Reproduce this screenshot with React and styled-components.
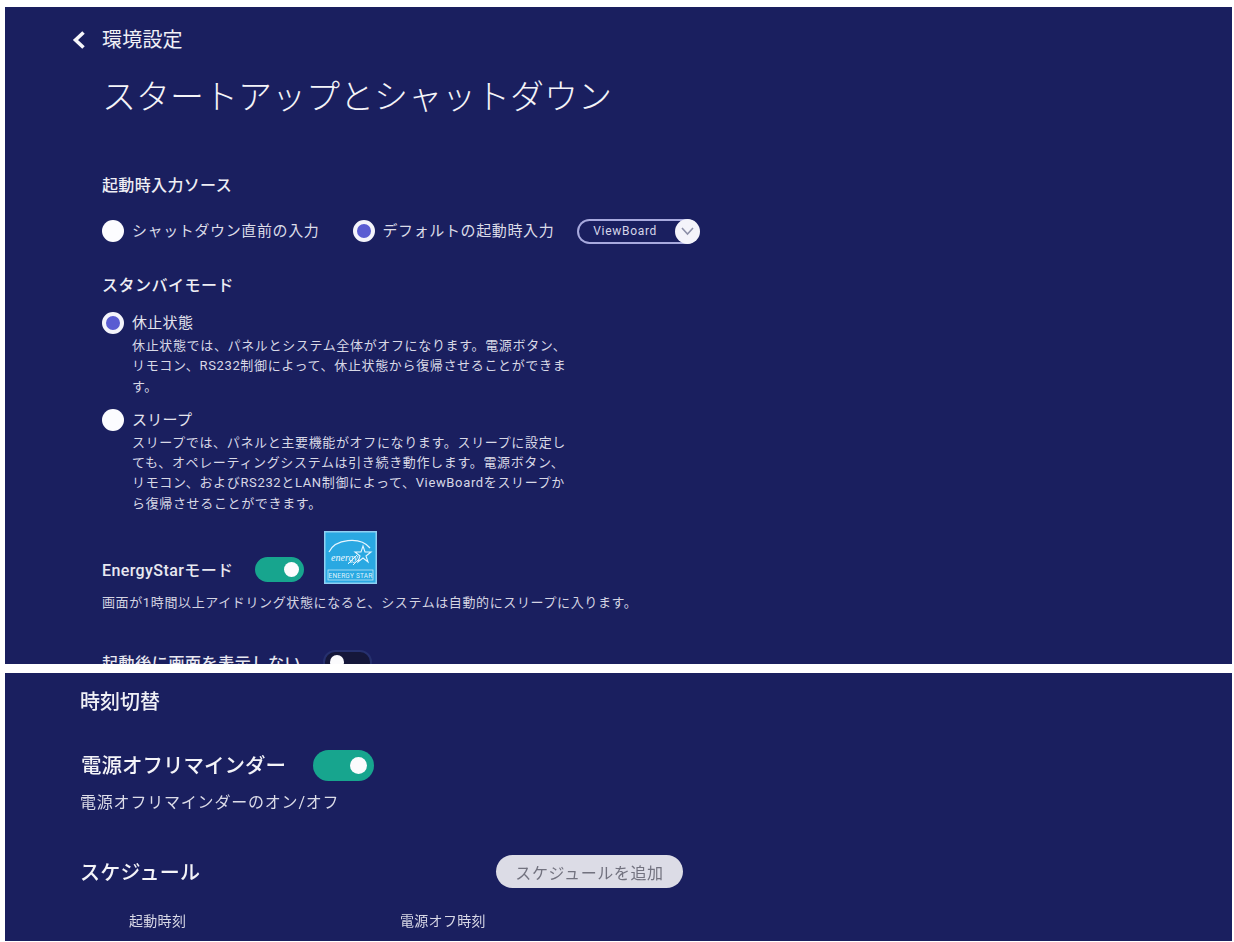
import React from 'react'
import styled, { createGlobalStyle } from 'styled-components'

const Global = createGlobalStyle`
  html, body { margin: 0; padding: 0; background: #fff; }
  body { font-family: Roboto, "Noto Sans CJK JP", sans-serif; color: #f0f0f6; }
`

const Page = styled.div`
  width: 1234px;
  height: 942px;
  box-sizing: border-box;
  padding: 7px 2px 0 5px;
  display: flex;
  flex-direction: column;
  gap: 9px;
  overflow: hidden;
  filter: blur(0.45px);
`

const Panel = styled.section`
  background: #1a1f5f;
  height: ${p => p.$height}px;
  box-sizing: border-box;
  padding: ${p => p.$padding};
  overflow: hidden;
  flex: none;
`

const BackRow = styled.div`
  display: flex;
  align-items: center;
  height: 26px;
  margin-left: -31px;
  gap: 15px;
`

const BackLabel = styled.span`
  font-size: 20px;
  line-height: 26px;
  letter-spacing: 0.2px;
`

const Title = styled.h1`
  font-size: 34px;
  font-weight: 300;
  line-height: 48px;
  height: 48px;
  margin: 20px 0 0;
  color: #f4f4f8;
`

const Heading = styled.h2`
  font-size: 16px;
  font-weight: 500;
  line-height: 22px;
  letter-spacing: ${p => p.$spacing}px;
  margin: ${p => p.$top}px 0 0;
  color: #eeeef4;
`

const InlineRow = styled.div`
  display: flex;
  align-items: center;
  height: 26px;
  margin-top: 21px;
`

const Dot = styled.span`
  flex: none;
  width: 22px;
  height: 22px;
  box-sizing: border-box;
  border-radius: 50%;
  background: ${p => (p.$on ? '#5a5cd2' : '#fcfcff')};
  border: ${p => (p.$on ? '4px solid #f4f4fb' : 'none')};
`

const RadioText = styled.span`
  font-size: 15px;
  line-height: 22px;
  letter-spacing: 0.62px;
  margin-left: ${p => p.$left}px;
  margin-right: ${p => p.$right || 0}px;
  color: #dcdce8;
`

const Select = styled.div`
  width: 122px;
  height: 25px;
  box-sizing: border-box;
  border: 2px solid #a8aade;
  border-right: none;
  border-radius: 13px;
  display: flex;
  align-items: center;
  justify-content: space-between;
  padding-left: 14px;
  font-size: 12px;
  font-weight: 400;
  letter-spacing: 0.7px;
  color: #d6d6ea;
`

const SelectKnob = styled.span`
  width: 25px;
  height: 25px;
  margin-right: -1px;
  border-radius: 50%;
  background: #f4f4fa;
  color: #8d90a8;
  display: flex;
  align-items: center;
  justify-content: center;
`

const Option = styled.div`
  display: grid;
  grid-template-columns: 22px 1fr;
  column-gap: 8px;
  margin-top: ${p => p.$top}px;
`

const OptionLabel = styled.div`
  font-size: 15px;
  line-height: 22px;
  letter-spacing: 0.3px;
  color: #e4e4ee;
`

const OptionText = styled.p`
  grid-column: 2;
  margin: 2px 0 0;
  font-size: 13px;
  line-height: 20.3px;
  letter-spacing: 0.65px;
  color: #d8d8e6;
  white-space: nowrap;
`

const StarRow = styled.div`
  display: flex;
  align-items: flex-end;
  margin-top: 17px;
  height: 53px;
`

const StarLabel = styled.span`
  font-size: 16px;
  font-weight: 500;
  line-height: 24px;
  letter-spacing: 0.4px;
  width: 153px;
  color: #e8e8f0;
  padding-bottom: 1px;
`

const Switch = styled.span`
  display: flex;
  align-items: center;
  flex: none;
  width: ${p => p.$w}px;
  height: ${p => p.$h}px;
  box-sizing: border-box;
  padding: 0 ${p => p.$pad}px;
  border-radius: ${p => p.$h / 2}px;
  background: ${p => (p.$on ? '#17a58e' : '#15173a')};
  justify-content: ${p => (p.$on ? 'flex-end' : 'flex-start')};
  border: ${p => (p.$on ? 'none' : '2px solid #26306e')};
  margin-bottom: ${p => p.$bottom || 0}px;
`

const Thumb = styled.span`
  width: ${p => p.$size}px;
  height: ${p => p.$size}px;
  border-radius: 50%;
  background: #fbfbfd;
`

const LogoWrap = styled.span`
  display: block;
  flex: none;
  width: 53px;
  height: 53px;
  margin-left: 20px;
`

const Note = styled.p`
  margin: 9px 0 0;
  font-size: 13px;
  line-height: 20px;
  letter-spacing: 0.62px;
  color: #d4d4e2;
  white-space: nowrap;
`

const ClippedRow = styled.div`
  display: flex;
  align-items: center;
  margin-top: 37px;
  height: 24px;
`

const ClippedLabel = styled.span`
  font-size: 16px;
  font-weight: 500;
  width: 221px;
  letter-spacing: 0.6px;
  color: #e8e8f0;
`

const SectionTitle = styled.h2`
  font-size: 20px;
  font-weight: 500;
  line-height: 28px;
  margin: 15px 0 0;
  color: #f0f0f6;
`

const ReminderRow = styled.div`
  display: flex;
  align-items: center;
  gap: 27px;
  margin-top: 33px;
  margin-left: 1px;
`

const ReminderLabel = styled.span`
  font-size: 20.5px;
  font-weight: 500;
  line-height: 32px;
  padding-top: 1px;
  color: #f4f4f8;
`

const ReminderNote = styled.p`
  margin: 8px 0 0;
  font-size: 16px;
  line-height: 26px;
  letter-spacing: 0.8px;
  color: #dcdce8;
`

const ScheduleRow = styled.div`
  display: flex;
  align-items: center;
  margin-top: 39px;
  height: 33px;
`

const ScheduleTitle = styled.h2`
  font-size: 20px;
  font-weight: 500;
  letter-spacing: 0.3px;
  width: 416px;
  margin: 0;
  color: #f4f4f8;
`

const AddButton = styled.button`
  width: 187px;
  height: 33px;
  border: none;
  border-radius: 17px;
  background: #dcdce6;
  color: #72727f;
  font: 400 16px Roboto, "Noto Sans CJK JP", sans-serif;
  letter-spacing: 0.6px;
  padding: 0;
`

const Columns = styled.div`
  display: grid;
  grid-template-columns: 271px auto;
  justify-content: start;
  padding-left: 49px;
  margin-top: 20px;
  font-size: 14px;
  line-height: 26px;
  letter-spacing: 0.3px;
  color: #d8d8e6;
`

const EnergyLogo = () => (
  <svg width="53" height="53" viewBox="0 0 53 53">
    <rect width="53" height="53" fill="#2aa8e2" />
    <rect x="0.75" y="0.75" width="51.5" height="51.5" fill="none" stroke="#8fd0f2" strokeWidth="1.5" />
    <path d="M5 21 C11 8 36 5 46 17" fill="none" stroke="#e6f6ff" strokeWidth="1.2" />
    <text x="7" y="30" fontSize="10" fontStyle="italic" fill="#eef9ff" fontFamily='"Liberation Serif", serif'>energy</text>
    <path d="M39 15 L41 21 L47 21 L42 25 L44 31 L39 27 L34 31 L36 25 L31 21 L37 21 Z" fill="none" stroke="#e6f6ff" strokeWidth="1.1" />
    <path d="M24 33 L33 24 M29 34 L35 28" fill="none" stroke="#e6f6ff" strokeWidth="1" />
    <rect x="4" y="39" width="45" height="10" fill="none" stroke="#bfe6f8" strokeWidth="0.8" />
    <text x="26.5" y="47" textAnchor="middle" fontSize="6.5" fill="#dff3fc" fontFamily="Roboto, sans-serif" letterSpacing="0.2">ENERGY STAR</text>
  </svg>
)

const Chevron = () => (
  <svg width="16" height="20" viewBox="0 0 16 20">
    <path d="M12.5 2.5 L4.5 10 L12.5 17.5" fill="none" stroke="#f6f6fa" strokeWidth="3.6" />
  </svg>
)

const ChevronDown = () => (
  <svg width="15" height="10" viewBox="0 0 15 10">
    <path d="M2 2 L7.5 8 L13 2" fill="none" stroke="currentColor" strokeWidth="1.6" />
  </svg>
)

export default function App() {
  return (
    <>
      <Global />
      <Page>
        <Panel $height={657} $padding="20px 0 0 97px">
          <BackRow>
            <Chevron />
            <BackLabel>環境設定</BackLabel>
          </BackRow>
          <Title>スタートアップとシャットダウン</Title>
          <Heading $top={54} $spacing={0.35}>起動時入力ソース</Heading>
          <InlineRow>
            <Dot />
            <RadioText $left={8} $right={34}>シャットダウン直前の入力</RadioText>
            <Dot $on />
            <RadioText $left={7} $right={23}>デフォルトの起動時入力</RadioText>
            <Select>
              ViewBoard
              <SelectKnob><ChevronDown /></SelectKnob>
            </Select>
          </InlineRow>
          <Heading $top={31} $spacing={0.5}>スタンバイモード</Heading>
          <Option $top={15}>
            <Dot $on />
            <OptionLabel>休止状態</OptionLabel>
            <OptionText>
              休止状態では、パネルとシステム全体がオフになります。電源ボタン、<br />
              リモコン、RS232制御によって、休止状態から復帰させることができま<br />
              す。
            </OptionText>
          </Option>
          <Option $top={12}>
            <Dot />
            <OptionLabel>スリープ</OptionLabel>
            <OptionText>
              スリープでは、パネルと主要機能がオフになります。スリープに設定し<br />
              ても、オペレーティングシステムは引き続き動作します。電源ボタン、<br />
              リモコン、およびRS232とLAN制御によって、ViewBoardをスリープか<br />
              ら復帰させることができます。
            </OptionText>
          </Option>
          <StarRow>
            <StarLabel>EnergyStarモード</StarLabel>
            <Switch $on $w={49} $h={25} $pad={5} $bottom={2}><Thumb $size={15} /></Switch>
            <LogoWrap><EnergyLogo /></LogoWrap>
          </StarRow>
          <Note>画面が1時間以上アイドリング状態になると、システムは自動的にスリープに入ります。</Note>
          <ClippedRow>
            <ClippedLabel>起動後に画面を表示しない</ClippedLabel>
            <Switch $w={49} $h={24} $pad={5}><Thumb $size={14} /></Switch>
          </ClippedRow>
        </Panel>
        <Panel $height={268} $padding="0 0 0 75px">
          <SectionTitle>時刻切替</SectionTitle>
          <ReminderRow>
            <ReminderLabel>電源オフリマインダー</ReminderLabel>
            <Switch $on $w={61} $h={31} $pad={7}><Thumb $size={17} /></Switch>
          </ReminderRow>
          <ReminderNote>電源オフリマインダーのオン/オフ</ReminderNote>
          <ScheduleRow>
            <ScheduleTitle>スケジュール</ScheduleTitle>
            <AddButton>スケジュールを追加</AddButton>
          </ScheduleRow>
          <Columns>
            <span>起動時刻</span>
            <span>電源オフ時刻</span>
          </Columns>
        </Panel>
      </Page>
    </>
  )
}
